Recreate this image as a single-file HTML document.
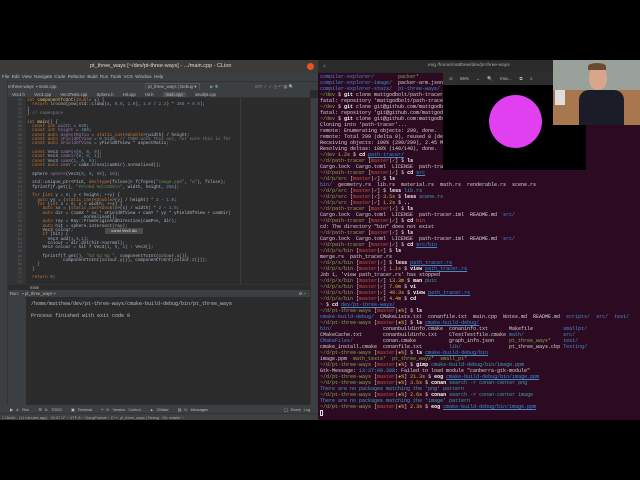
<!DOCTYPE html>
<html style="width:640px;height:480px;overflow:hidden"><head><meta charset="utf-8"><style>
*{margin:0;padding:0;box-sizing:border-box}
body{width:640px;height:480px;background:#000;overflow:hidden;position:relative;font-family:"Liberation Sans",sans-serif}
.abs{position:absolute}
.mono{font-family:"Liberation Mono",monospace;white-space:pre}
#clion{left:0;top:60px;width:318px;height:360px;background:#2b2b2b}
#term{left:318px;top:60px;width:322px;height:360px;background:#2c0a22;overflow:hidden}
.tl{position:absolute;left:2px;font-size:5px;line-height:6px;color:#d8d4d0}
.g{color:#7fb24a}.r{color:#c8553d}.y{color:#d8b83a}.b{color:#3f8fd0}.c{color:#38a5b5}.u{text-decoration:underline;color:#3f8fd0}.w{color:#fff;font-weight:bold}
.code{position:absolute;left:27px;top:99px;font-size:4.3px;line-height:4.33px;color:#a9b7c6}
.k{color:#cc7832}.n{color:#6897bb}.s{color:#6a8759}.p{color:#9876aa}.cm{color:#808080}.f{color:#ffc66d}
.ln{position:absolute;left:8px;top:99px;width:14px;font-size:3.6px;line-height:4.33px;color:#606366;text-align:right}
</style></head><body>
<div id="clion" class="abs">
 <div class="abs" style="left:0;top:0;width:318px;height:13px;background:#3c3b37"></div>
 <div class="abs" style="left:90px;top:3px;font-size:5.5px;color:#dfdbd2">pt_three_ways [~/dev/pt-three-ways] - .../main.cpp - CLion</div>
 <div class="abs" style="left:307px;top:3px;width:7px;height:7px;border-radius:50%;background:#e95420"></div>
 <div class="abs" style="left:0;top:13px;width:318px;height:8px;background:#3c3f41;font-size:4.6px;color:#bbb;padding:1px 2px;word-spacing:1px">File Edit View Navigate Code Refactor Build Run Tools VCS Window Help</div>
 <div class="abs" style="left:0;top:21px;width:318px;height:9px;background:#3c3f41;border-top:1px solid #323232;font-size:4.4px;color:#bbb;padding:2px 3px">■ pt-three-ways &nbsp;▪ main.cpp<span style="position:absolute;left:145px;top:1px;border:1px solid #555;padding:0 2px">pt_three_ways | Debug ▾</span><span style="position:absolute;left:210px;color:#59a869">▶ ✱</span><span style="position:absolute;left:255px;color:#888">GIT ✓ ✓ ◷ ↶ ▦ 🔍</span></div>
 <div class="abs" style="left:8px;top:30px;width:302px;height:8px;background:#3c3f41;border-bottom:1px solid #323232;font-size:4.2px;color:#bbb;padding:1.5px 4px;word-spacing:8px">Vec3.h Vec3.cpp Vec3Tests.cpp Sphere.h Hit.cpp Hit.h <span style="background:#4e5254;padding:0 3px">main.cpp</span> smallpt.cpp</div>
 <div class="abs" style="left:0;top:21px;width:8px;height:332px;background:#3c3f41;border-right:1px solid #323232"></div>
 <div class="abs" style="left:310px;top:38px;width:8px;height:315px;background:#3c3f41;border-left:1px solid #323232"></div>
 <div class="abs" style="left:8px;top:38px;width:18px;height:190px;background:#313335"></div>
 <div class="abs" style="left:240px;top:38px;width:1px;height:190px;background:#3b3b3b"></div>
</div>
<div class="ln mono">30
31
32
33
34
35
36
37
38
39
40
41
42
43
44
45
46
47
48
49
50
51
52
53
54
55
56
57
58
59
60
61
62
63
64
65
66
67
68
69
70
71
72</div>
<div class="code mono"><span class="k">int</span> <span class="f">componentToInt</span>(<span class="k">double</span> x) {
  <span class="k">return</span> lround(pow(std::clamp(x, <span class="n">0.0</span>, <span class="n">1.0</span>), <span class="n">1.0</span> / <span class="n">2.2</span>) * <span class="n">255</span> + <span class="n">0.5</span>);
}
} <span class="cm">// namespace</span>

<span class="k">int</span> <span class="f">main</span>() {
  <span class="k">const int</span> <span class="p">width</span> = <span class="n">640</span>;
  <span class="k">const int</span> <span class="p">height</span> = <span class="n">480</span>;
  <span class="k">const auto</span> <span class="p">aspectRatio</span> = <span class="k">static_cast</span>&lt;<span class="k">double</span>&gt;(width) / height;
  <span class="k">const auto</span> <span class="p">yFieldOfView</span> = <span class="n">0.5135</span>; <span class="cm">// TODO work this out, not sure this is for</span>
  <span class="k">const auto</span> <span class="p">xFieldOfView</span> = yFieldOfView * aspectRatio;

  <span class="k">const</span> Vec3 <span class="p">camPos</span>(<span class="n">0</span>, <span class="n">0</span>, <span class="n">0</span>);
  <span class="k">const</span> Vec3 <span class="p">camDir</span>(<span class="n">0</span>, <span class="n">0</span>, <span class="n">1</span>);
  <span class="k">const</span> Vec3 <span class="p">camX</span>(<span class="n">1</span>, <span class="n">0</span>, <span class="n">0</span>);
  <span class="k">const auto</span> <span class="p">camY</span> = camX.cross(camDir).normalised();

  Sphere <span class="p">sphere</span>(Vec3(<span class="n">0</span>, <span class="n">0</span>, <span class="n">50</span>), <span class="n">15</span>);

  std::unique_ptr&lt;FILE, <span class="k">decltype</span>(fclose)&gt; f(fopen(<span class="s">"image.ppm"</span>, <span class="s">"w"</span>), fclose);
  fprintf(f.get(), <span class="s">"P3\n%d %d\n255\n"</span>, width, height, <span class="n">255</span>);

  <span class="k">for</span> (<span class="k">int</span> y = <span class="n">0</span>; y &lt; height; ++y) {
    <span class="k">auto</span> yy = (<span class="k">static_cast</span>&lt;<span class="k">double</span>&gt;(y) / height) * <span class="n">2</span> - <span class="n">1.0</span>;
    <span class="k">for</span> (<span class="k">int</span> x = <span class="n">0</span>; x &lt; width; ++x) {
      <span class="k">auto</span> xx = (<span class="k">static_cast</span>&lt;<span class="k">double</span>&gt;(x) / width) * <span class="n">2</span> - <span class="n">1.0</span>;
      <span class="k">auto</span> dir = (camX * xx * xFieldOfView + camY * yy * yFieldOfView + camDir)
                     .normalised();
      <span class="k">auto</span> ray = Ray::FromOriginAndDirection(camPos, dir);
      <span class="k">auto</span> hit = sphere.intersect(ray);
      Vec3 colour;
      <span class="k">if</span> (hit) {
        Vec3 add(<span class="n">1</span>,<span class="n">0</span>,<span class="n">1</span>);
        colour = dir.dot(hit->normal);
      Vec3 colour = hit ? Vec3(<span class="n">1</span>, <span class="n">0</span>, <span class="n">1</span>) : Vec3();

      fprintf(f.get(), <span class="s">"%d %d %d "</span>, componentToInt(colour.x()),
              componentToInt(colour.y()), componentToInt(colour.z()));
    }
  }

  <span class="k">return</span> <span class="n">0</span>;</div>
<div class="abs" style="left:105px;top:228px;width:38px;height:6px;background:#4b4d4d;font-size:4px;color:#ddd;text-align:center">const Vec3 &amp;b</div>
<div class="abs" style="left:8px;top:284px;width:302px;height:6px;background:#2b2b2b;border-top:1px solid #323232;font-size:4.2px;color:#bbb;padding-left:22px">main</div>
<div class="abs" style="left:8px;top:290px;width:302px;height:7px;background:#3c3f41;font-size:4.2px;color:#bbb;padding:1px 2px">Run: &nbsp; ▪ pt_three_ways ×<span style="position:absolute;right:4px">⚙ –</span></div>
<div class="abs" style="left:8px;top:297px;width:18px;height:108px;background:#3c3f41"></div>
<div class="abs mono" style="left:31px;top:299px;font-size:5px;line-height:11.5px;color:#bbb">/home/matthew/dev/pt-three-ways/cmake-build-debug/bin/pt_three_ways
Process finished with exit code 0</div>
<div class="abs" style="left:0;top:405px;width:318px;height:8px;background:#3c3f41;font-size:3.8px;color:#bbb;padding:2px 10px;word-spacing:2px">▶ 4: Run &nbsp; ☰ 6: TODO &nbsp; ▣ Terminal &nbsp; ⑂ 9: Version Control &nbsp; ▲ CMake &nbsp; ▤ 0: Messages<span style="position:absolute;right:8px">◯ Event Log</span></div>
<div class="abs" style="left:0;top:413px;width:318px;height:7px;background:#3c3f41;border-top:1px solid #323232;font-size:3.8px;color:#aaa;padding:1px 2px">☐ Build... (11 minutes ago) &nbsp; 43:37 LF ÷ UTF-8 ÷ ClangFormat ÷ C++: pt_three_ways | Debug &nbsp; Git: master ÷</div>

<div id="term" class="abs">
 <div class="abs" style="left:0;top:0;width:237px;height:13px;background:#2a2a2a"></div>
 <div class="abs" style="left:5px;top:3px;font-size:5px;color:#aaa">⌂</div>
 <div class="abs" style="left:110px;top:3px;font-size:4.8px;color:#aaa">eog /home/matthew/dev/pt-three-ways</div>
 <div class="mono">
<div class="tl" style="top:14px"><span class="b">compiler-explorer/</span>        <span class="g">packer*</span></div>
<div class="tl" style="top:20px"><span class="b">compiler-explorer-image/</span>  packer-arm.json</div>
<div class="tl" style="top:26px"><span class="b">compiler-explorer-stats/</span>  <span class="b">pt-three-ways/</span></div>
<div class="tl" style="top:32px"><span class="g">~/dev</span> $ <span class="w">git</span> clone mattgodbolt/path-tracer</div>
<div class="tl" style="top:38px">fatal: repository 'mattgodbolt/path-trace</div>
<div class="tl" style="top:44px"><span class="g">~/dev</span> $ <span class="w">git</span> clone git@github.com/mattgodb</div>
<div class="tl" style="top:50px">fatal: repository 'git@github.com/mattgod</div>
<div class="tl" style="top:56px"><span class="g">~/dev</span> $ <span class="w">git</span> clone git@github.com:mattgodb</div>
<div class="tl" style="top:62px">Cloning into 'path-tracer'...</div>
<div class="tl" style="top:68px">remote: Enumerating objects: 299, done.</div>
<div class="tl" style="top:74px">remote: Total 299 (delta 0), reused 0 (de</div>
<div class="tl" style="top:80px">Receiving objects: 100% (299/299), 2.45 M</div>
<div class="tl" style="top:86px">Resolving deltas: 100% (140/140), done.</div>
<div class="tl" style="top:92px"><span class="g">~/dev</span> <span class="y">1.2s</span> $ <span class="w">cd</span> <span class="u">path-tracer/</span></div>
<div class="tl" style="top:98px"><span class="g">~/d/path-tracer</span> [<span class="r">master</span>|<span class="y">✓</span>] $ <span class="w">ls</span></div>
<div class="tl" style="top:104px">Cargo.lock  Cargo.toml  LICENSE  path-tra</div>
<div class="tl" style="top:110px"><span class="g">~/d/path-tracer</span> [<span class="r">master</span>|<span class="y">✓</span>] $ <span class="w">cd</span> <span class="u">src</span></div>
<div class="tl" style="top:116px"><span class="g">~/d/p/src</span> [<span class="r">master</span>|<span class="y">✓</span>] $ <span class="w">ls</span></div>
<div class="tl" style="top:122px"><span class="b">bin/</span>  geometry.rs  lib.rs  material.rs  math.rs  renderable.rs  scene.rs</div>
<div class="tl" style="top:128px"><span class="g">~/d/p/src</span> [<span class="r">master</span>|<span class="y">✓</span>] $ <span class="w">less</span> <span class="c">lib.rs</span></div>
<div class="tl" style="top:134px"><span class="g">~/d/p/src</span> [<span class="r">master</span>|<span class="y">✓</span>] <span class="y">3.5s</span> $ <span class="w">less</span> <span class="c">scene.rs</span></div>
<div class="tl" style="top:140px"><span class="g">~/d/p/src</span> [<span class="r">master</span>|<span class="y">✓</span>] <span class="y">1.2s</span> $ <span class="w">..</span></div>
<div class="tl" style="top:146px"><span class="g">~/d/path-tracer</span> [<span class="r">master</span>|<span class="y">✓</span>] $ <span class="w">ls</span></div>
<div class="tl" style="top:152px">Cargo.lock  Cargo.toml  LICENSE  path-tracer.iml  README.md  <span class="b">src/</span></div>
<div class="tl" style="top:158px"><span class="g">~/d/path-tracer</span> [<span class="r">master</span>|<span class="y">✓</span>] $ <span class="w">cd</span> <span class="r">bin</span></div>
<div class="tl" style="top:164px">cd: The directory "bin" does not exist</div>
<div class="tl" style="top:170px"><span class="g">~/d/path-tracer</span> [<span class="r">master</span>|<span class="y">✓</span>] $ <span class="w">ls</span></div>
<div class="tl" style="top:176px">Cargo.lock  Cargo.toml  LICENSE  path-tracer.iml  README.md  <span class="b">src/</span></div>
<div class="tl" style="top:182px"><span class="g">~/d/path-tracer</span> [<span class="r">master</span>|<span class="y">✓</span>] $ <span class="w">cd</span> <span class="u">src/bin</span></div>
<div class="tl" style="top:188px"><span class="g">~/d/p/s/bin</span> [<span class="r">master</span>|<span class="y">✓</span>] $ <span class="w">ls</span></div>
<div class="tl" style="top:194px">merge.rs  path_tracer.rs</div>
<div class="tl" style="top:200px"><span class="g">~/d/p/s/bin</span> [<span class="r">master</span>|<span class="y">✓</span>] $ <span class="w">less</span> <span class="u">path_tracer.rs</span></div>
<div class="tl" style="top:206px"><span class="g">~/d/p/s/bin</span> [<span class="r">master</span>|<span class="y">✓</span>] <span class="y">1.1s</span> $ <span class="w">view</span> <span class="u">path_tracer.rs</span></div>
<div class="tl" style="top:212px">Job 1, 'view path_tracer.rs' has stopped</div>
<div class="tl" style="top:218px"><span class="g">~/d/p/s/bin</span> [<span class="r">master</span>|<span class="y">✓</span>] <span class="y">13.3m</span> $ <span class="w">man</span> <span class="c">putc</span></div>
<div class="tl" style="top:224px"><span class="g">~/d/p/s/bin</span> [<span class="r">master</span>|<span class="y">✓</span>] <span class="y">7.0m</span> $ <span class="w">vi</span></div>
<div class="tl" style="top:230px"><span class="g">~/d/p/s/bin</span> [<span class="r">master</span>|<span class="y">✓</span>] <span class="y">40.3s</span> $ <span class="w">view</span> <span class="u">path_tracer.rs</span></div>
<div class="tl" style="top:236px"><span class="g">~/d/p/s/bin</span> [<span class="r">master</span>|<span class="y">✓</span>] <span class="y">4.4m</span> $ <span class="w">cd</span></div>
<div class="tl" style="top:242px"><span class="g">~</span> $ <span class="w">cd</span> <span class="u">dev/pt-three-ways/</span></div>
<div class="tl" style="top:248px"><span class="g">~/d/pt-three-ways</span> [<span class="r">master</span>|<span class="y">●%</span>] $ <span class="w">ls</span></div>
<div class="tl" style="top:254px"><span class="b">cmake-build-debug/</span>  CMakeLists.txt  conanfile.txt  main.cpp  Notes.md  README.md  <span class="b">scripts/</span>  <span class="b">src/</span>  <span class="b">test/</span></div>
<div class="tl" style="top:260px"><span class="g">~/d/pt-three-ways</span> [<span class="r">master</span>|<span class="y">●%</span>] $ <span class="w">ls</span> <span class="u">cmake-build-debug/</span></div>
<div class="tl" style="top:266px"><span class="b">bin/</span>                 conanbuildinfo.cmake  conaninfo.txt       Makefile          <span class="b">smallpt/</span></div>
<div class="tl" style="top:272px">CMakeCache.txt       conanbuildinfo.txt    CTestTestfile.cmake <span class="b">math/</span>             <span class="b">src/</span></div>
<div class="tl" style="top:278px"><span class="b">CMakeFiles/</span>          conan.cmake           graph_info.json     <span class="g">pt_three_ways*</span>    <span class="b">test/</span></div>
<div class="tl" style="top:284px">cmake_install.cmake  conanfile.txt         <span class="b">lib/</span>                pt_three_ways.cbp <span class="b">Testing/</span></div>
<div class="tl" style="top:290px"><span class="g">~/d/pt-three-ways</span> [<span class="r">master</span>|<span class="y">●%</span>] $ <span class="w">ls</span> <span class="u">cmake-build-debug/bin</span></div>
<div class="tl" style="top:296px">image.ppm  <span class="g">math_tests*</span>  <span class="g">pt_three_ways*</span>  <span class="g">small_pt*</span></div>
<div class="tl" style="top:302px"><span class="g">~/d/pt-three-ways</span> [<span class="r">master</span>|<span class="y">●%</span>] $ <span class="w">gimp</span> <span class="c">cmake-build-debug/bin/image.ppm</span></div>
<div class="tl" style="top:308px">Gtk-Message: <span class="c">13:37:08.308</span>: Failed to load module "canberra-gtk-module"</div>
<div class="tl" style="top:314px"><span class="g">~/d/pt-three-ways</span> [<span class="r">master</span>|<span class="y">●%</span>] <span class="y">21.3s</span> $ <span class="w">eog</span> <span class="u">cmake-build-debug/bin/image.ppm</span></div>
<div class="tl" style="top:320px"><span class="g">~/d/pt-three-ways</span> [<span class="r">master</span>|<span class="y">●%</span>] <span class="y">3.5s</span> $ <span class="w">conan</span> <span class="c">search -r conan-center png</span></div>
<div class="tl" style="top:326px"><span class="c">There are no packages matching the 'png' pattern</span></div>
<div class="tl" style="top:332px"><span class="g">~/d/pt-three-ways</span> [<span class="r">master</span>|<span class="y">●%</span>] <span class="y">2.6s</span> $ <span class="w">conan</span> <span class="c">search -r conan-center image</span></div>
<div class="tl" style="top:338px"><span class="c">There are no packages matching the 'image' pattern</span></div>
<div class="tl" style="top:344px"><span class="g">~/d/pt-three-ways</span> [<span class="r">master</span>|<span class="y">●%</span>] <span class="y">2.3s</span> $ <span class="w">eog</span> <span class="u">cmake-build-debug/bin/image.ppm</span></div>
<div class="tl" style="top:350px;width:3px;height:6px;border:1px solid #ddd"></div>
 </div>
</div>
<div class="abs" style="left:443px;top:72px;width:143px;height:98px;background:#000">
 <div style="height:13px;background:#2d2d2d;font-size:4.5px;color:#bbb;padding:4px 6px;word-spacing:6px">⊙ 56% ⌄ 🔍 Ima… ⧉ ≡</div>
 <div class="abs" style="left:46px;top:23px;width:53px;height:53px;border-radius:50%;background:#e040f0"></div>
</div>
<div class="abs" style="left:553px;top:60px;width:87px;height:65px;background:#7b6a55;overflow:hidden">
 <div class="abs" style="left:0;top:0;width:87px;height:30px;background:#9aa09a"></div>
 <div class="abs" style="left:0;top:30px;width:87px;height:35px;background:#a8774e"></div>
 <div class="abs" style="left:26px;top:30px;width:45px;height:35px;border-radius:10px 10px 0 0;background:#1a1c28"></div>
 <div class="abs" style="left:36px;top:6px;width:18px;height:24px;border-radius:45%;background:#d9a58c"></div>
 <div class="abs" style="left:35px;top:3px;width:18px;height:7px;border-radius:50% 50% 0 0;background:#6b4a30"></div>
 <div class="abs" style="left:2px;top:30px;width:10px;height:15px;background:#ddd"></div>
</div>
</body></html>
